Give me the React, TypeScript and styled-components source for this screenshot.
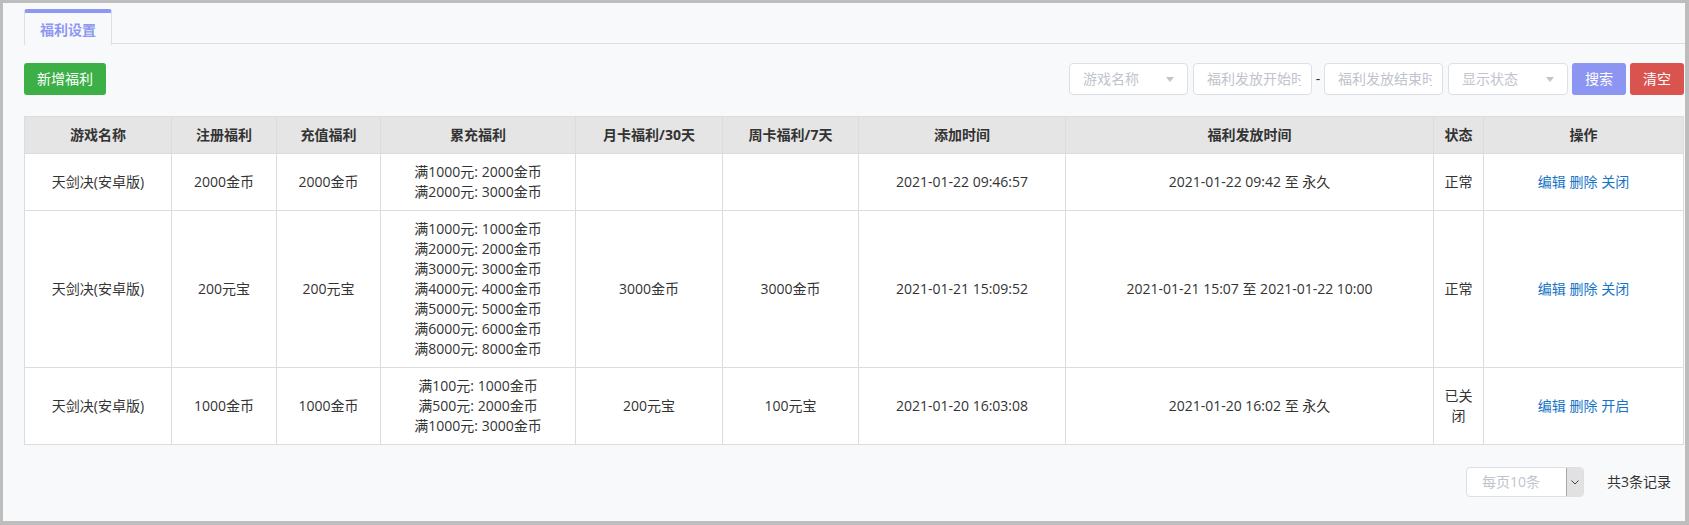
import React from "react";
import styled, { createGlobalStyle } from "styled-components";

const Global = createGlobalStyle`
  html, body { margin: 0; padding: 0; background: #f8f9fb; }
  body { font-family: "Open Sans", "Noto Sans CJK SC", sans-serif; color: #333; }
  * { box-sizing: border-box; }
`;

const FONT = `"Open Sans", "Noto Sans CJK SC", sans-serif`;

const Frame = styled.div`
  width: 1689px;
  height: 525px;
  border-style: solid;
  border-color: #bdbdbd;
  border-width: 3px 4px 4px 3px;
  background: #f8f9fb;
  padding: 6px 1px 0 21px;
  overflow: hidden;
  display: flex;
  flex-direction: column;
  font-family: ${FONT};
  font-size: 14px;
`;

const TabNav = styled.div`
  display: flex;
  height: 35px;
  border-bottom: 1px solid #dcdfe6;
  margin-right: -1px;
`;

const Tab = styled.div<{ $active?: boolean }>`
  height: 36px;
  padding: 7px 15px 0;
  border: 1px solid #dcdfe6;
  border-top: 4px solid #8e97f2;
  border-bottom: none;
  border-radius: 3px 3px 0 0;
  background: #f8f9fb;
  color: #8e97f2;
  font-weight: 700;
  line-height: 20px;
  font-size: 14px;
`;

const Toolbar = styled.div`
  display: flex;
  align-items: center;
  margin-top: 19px;
  height: 32px;
`;

const Filters = styled.div`
  margin-left: auto;
  display: flex;
  align-items: center;
`;

const Btn = styled.button<{ $bg: string; $w: number; $ml?: number }>`
  width: ${(p) => p.$w}px;
  height: 32px;
  margin-left: ${(p) => p.$ml ?? 0}px;
  border: none;
  border-radius: 3px;
  background: ${(p) => p.$bg};
  color: #fff;
  font-family: ${FONT};
  font-size: 14px;
  line-height: 20px;
  padding: 0;
  cursor: pointer;
`;

const Field = styled.div<{ $w: number; $ml?: number }>`
  position: relative;
  width: ${(p) => p.$w}px;
  height: 32px;
  margin-left: ${(p) => p.$ml ?? 0}px;
  border: 1px solid #dcdfe6;
  border-radius: 4px;
  background: #fff;
  display: flex;
  align-items: center;
  padding: 0 10px 0 13px;
  overflow: hidden;
`;

const Placeholder = styled.span`
  color: #c0c4cc;
  white-space: nowrap;
  overflow: hidden;
  line-height: 20px;
  flex: 1;
`;

const Caret = styled.span`
  width: 0;
  height: 0;
  border-left: 4px solid transparent;
  border-right: 4px solid transparent;
  border-top: 5px solid #c0c4cc;
  margin-right: 3px;
`;

const Dash = styled.span`
  width: 12px;
  text-align: center;
  color: #333;
  line-height: 20px;
`;

const Table = styled.table`
  margin-top: 21px;
  width: 1659px;
  border-collapse: collapse;
  table-layout: fixed;
  background: #fff;
`;

const Th = styled.th`
  background: #e5e5e5;
  border: 1px solid #dcdcdc;
  padding: 8px 8px;
  line-height: 20px;
  font-size: 14px;
  font-weight: 700;
  color: #333;
  text-align: center;
`;

const Td = styled.td`
  border: 1px solid #dcdcdc;
  padding: 8px 8px;
  line-height: 20px;
  font-size: 14px;
  color: #333;
  text-align: center;
  vertical-align: middle;
`;

const Line = styled.div`
  white-space: nowrap;
`;

const Link = styled.a`
  color: #1674c6;
  text-decoration: none;
  cursor: pointer;
`;

const Pager = styled.div`
  display: flex;
  justify-content: flex-end;
  align-items: center;
  margin-top: 22px;
  padding-right: 13px;
`;

const PageSelect = styled.div`
  width: 118px;
  height: 30px;
  border: 1px solid #dcdfe6;
  border-radius: 4px;
  background: #fff;
  display: flex;
  overflow: hidden;
`;

const PageText = styled.span`
  flex: 1;
  color: #c0c4cc;
  line-height: 28px;
  padding-left: 15px;
`;

const ArrowBox = styled.span`
  width: 17px;
  background: #e1e1e1;
  border-left: 1px solid #a9a9a9;
  display: flex;
  align-items: center;
  justify-content: center;
`;

const Total = styled.span`
  margin-left: 23px;
  color: #333;
  line-height: 20px;
`;

const widths = [147, 105, 104, 195, 147, 136, 207, 368, 50, 200];
const headers = ["游戏名称", "注册福利", "充值福利", "累充福利", "月卡福利/30天", "周卡福利/7天", "添加时间", "福利发放时间", "状态", "操作"];

type Row = {
  game: string;
  reg: string;
  pay: string;
  cum: string[];
  month: string;
  week: string;
  added: string;
  period: string;
  status: string;
  toggle: string;
};

const rows: Row[] = [
  {
    game: "天剑决(安卓版)",
    reg: "2000金币",
    pay: "2000金币",
    cum: ["满1000元: 2000金币", "满2000元: 3000金币"],
    month: "",
    week: "",
    added: "2021-01-22 09:46:57",
    period: "2021-01-22 09:42 至 永久",
    status: "正常",
    toggle: "关闭",
  },
  {
    game: "天剑决(安卓版)",
    reg: "200元宝",
    pay: "200元宝",
    cum: [
      "满1000元: 1000金币",
      "满2000元: 2000金币",
      "满3000元: 3000金币",
      "满4000元: 4000金币",
      "满5000元: 5000金币",
      "满6000元: 6000金币",
      "满8000元: 8000金币",
    ],
    month: "3000金币",
    week: "3000金币",
    added: "2021-01-21 15:09:52",
    period: "2021-01-21 15:07 至 2021-01-22 10:00",
    status: "正常",
    toggle: "关闭",
  },
  {
    game: "天剑决(安卓版)",
    reg: "1000金币",
    pay: "1000金币",
    cum: ["满100元: 1000金币", "满500元: 2000金币", "满1000元: 3000金币"],
    month: "200元宝",
    week: "100元宝",
    added: "2021-01-20 16:03:08",
    period: "2021-01-20 16:02 至 永久",
    status: "已关闭",
    toggle: "开启",
  },
];

export default function App() {
  return (
    <>
      <Global />
      <Frame>
        <TabNav>
          <Tab $active>福利设置</Tab>
        </TabNav>
        <Toolbar>
          <Btn $bg="#3daf47" $w={82}>新增福利</Btn>
          <Filters>
            <Field $w={119}>
              <Placeholder>游戏名称</Placeholder>
              <Caret />
            </Field>
            <Field $w={119} $ml={5}>
              <Placeholder>福利发放开始时间</Placeholder>
            </Field>
            <Dash>-</Dash>
            <Field $w={119}>
              <Placeholder>福利发放结束时间</Placeholder>
            </Field>
            <Field $w={120} $ml={5}>
              <Placeholder>显示状态</Placeholder>
              <Caret />
            </Field>
            <Btn $bg="#8c95f1" $w={54} $ml={4}>搜索</Btn>
            <Btn $bg="#d9534f" $w={54} $ml={4}>清空</Btn>
          </Filters>
        </Toolbar>
        <Table>
          <colgroup>
            {widths.map((w, i) => (
              <col key={i} style={{ width: w }} />
            ))}
          </colgroup>
          <thead>
            <tr>
              {headers.map((h) => (
                <Th key={h}>{h}</Th>
              ))}
            </tr>
          </thead>
          <tbody>
            {rows.map((r, i) => (
              <tr key={i}>
                <Td>{r.game}</Td>
                <Td>{r.reg}</Td>
                <Td>{r.pay}</Td>
                <Td>
                  {r.cum.map((c) => (
                    <Line key={c}>{c}</Line>
                  ))}
                </Td>
                <Td>{r.month}</Td>
                <Td>{r.week}</Td>
                <Td>{r.added}</Td>
                <Td>{r.period}</Td>
                <Td>{r.status}</Td>
                <Td>
                  <Link>编辑</Link> <Link>删除</Link> <Link>{r.toggle}</Link>
                </Td>
              </tr>
            ))}
          </tbody>
        </Table>
        <Pager>
          <PageSelect>
            <PageText>每页10条</PageText>
            <ArrowBox>
              <svg width="8" height="5" viewBox="0 0 8 5">
                <path d="M0.5 0.5 L4 4 L7.5 0.5" fill="none" stroke="#444" strokeWidth="1" />
              </svg>
            </ArrowBox>
          </PageSelect>
          <Total>共3条记录</Total>
        </Pager>
      </Frame>
    </>
  );
}
